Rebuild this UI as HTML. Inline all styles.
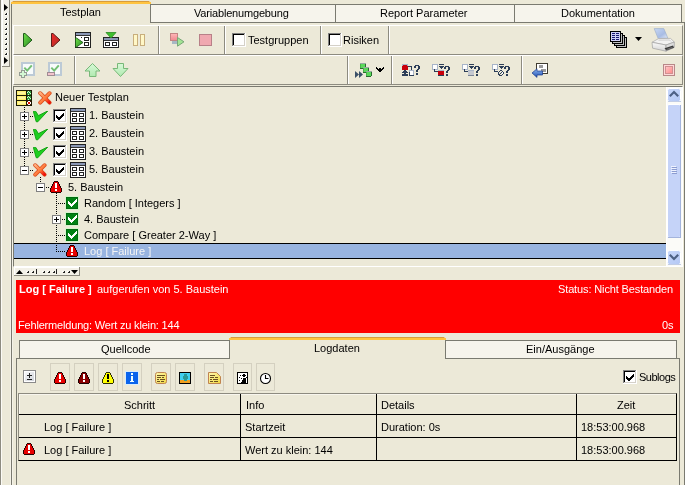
<!DOCTYPE html>
<html><head><meta charset="utf-8">
<style>
*{margin:0;padding:0;box-sizing:border-box}
html,body{width:685px;height:485px;overflow:hidden;background:#ece9d8;font-family:"Liberation Sans",sans-serif;font-size:11px;color:#000}
.a{position:absolute}
.t{position:absolute;white-space:pre;line-height:13px;filter:grayscale(1)}
.tab{position:absolute;background:#f6f4ec;border:1px solid #7a7a70;border-bottom:none}
.hl{position:absolute;height:1px}
.vl{position:absolute;width:1px}
.cb{position:absolute;width:13px;height:13px;background:#fff;border:1px solid #1c5180}
svg{position:absolute;overflow:visible}
</style></head><body>

<!-- left strip -->
<svg style="left:0;top:0" width="14" height="485" shape-rendering="crispEdges">
<rect x="0" y="0" width="1" height="485" fill="#8d8b80"/>
<rect x="1" y="0" width="1" height="485" fill="#fbfaf5"/>
<rect x="2" y="0" width="7" height="66" fill="#f1efe6"/>
<rect x="2" y="0" width="1" height="66" fill="#fff"/>
<rect x="9" y="0" width="1" height="67" fill="#8d8b80"/>
<rect x="2" y="66" width="8" height="1" fill="#8d8b80"/>
<g fill="#fff"><rect x="7" y="13" width="1" height="2"/><rect x="5" y="15" width="2" height="1"/><rect x="7" y="18" width="1" height="2"/><rect x="5" y="20" width="2" height="1"/><rect x="7" y="23" width="1" height="2"/><rect x="5" y="25" width="2" height="1"/><rect x="7" y="28" width="1" height="2"/><rect x="5" y="30" width="2" height="1"/><rect x="7" y="33" width="1" height="2"/><rect x="5" y="35" width="2" height="1"/><rect x="7" y="38" width="1" height="2"/><rect x="5" y="40" width="2" height="1"/><rect x="7" y="43" width="1" height="2"/><rect x="5" y="45" width="2" height="1"/><rect x="7" y="48" width="1" height="2"/><rect x="5" y="50" width="2" height="1"/><rect x="7" y="53" width="1" height="2"/><rect x="5" y="55" width="2" height="1"/></g>
<g fill="#222"><rect x="6" y="13" width="1" height="1"/><rect x="5" y="14" width="2" height="1"/><rect x="6" y="18" width="1" height="1"/><rect x="5" y="19" width="2" height="1"/><rect x="6" y="23" width="1" height="1"/><rect x="5" y="24" width="2" height="1"/><rect x="6" y="28" width="1" height="1"/><rect x="5" y="29" width="2" height="1"/><rect x="6" y="33" width="1" height="1"/><rect x="5" y="34" width="2" height="1"/><rect x="6" y="38" width="1" height="1"/><rect x="5" y="39" width="2" height="1"/><rect x="6" y="43" width="1" height="1"/><rect x="5" y="44" width="2" height="1"/><rect x="6" y="48" width="1" height="1"/><rect x="5" y="49" width="2" height="1"/><rect x="6" y="53" width="1" height="1"/><rect x="5" y="54" width="2" height="1"/></g>
<path d="M4 4 L8 7.5 L4 11 Z" fill="#000" shape-rendering="auto"/>
<path d="M4 57 L8 60.5 L4 64 Z" fill="#000" shape-rendering="auto"/>
<rect x="12" y="23" width="1" height="462" fill="#f4f2e8"/><rect x="10" y="67" width="1" height="418" fill="#f4f2e8"/>
</svg>
<!-- top tabs -->
<div class="tab" style="left:150px;top:4px;width:186px;height:19px"></div>
<div class="tab" style="left:335px;top:4px;width:180px;height:19px"></div>
<div class="tab" style="left:514px;top:4px;width:168px;height:19px"></div>
<div class="a" style="left:11px;top:1px;width:140px;height:23px;background:#ece9d8"></div>
<div class="a" style="left:13px;top:1px;width:136px;height:1px;background:#d89c3c"></div>
<div class="a" style="left:11px;top:2px;width:140px;height:2px;background:#ffc440"></div>
<div class="a" style="left:12px;top:1px;width:1px;height:1px;background:#f0c890"></div>
<div class="a" style="left:149px;top:1px;width:1px;height:1px;background:#f0c890"></div>
<div class="a" style="left:11px;top:4px;width:1px;height:20px;background:#7a7a70"></div>
<div class="a" style="left:150px;top:4px;width:1px;height:19px;background:#7a7a70"></div>
<div class="t" style="left:60px;top:6px">Testplan</div>
<div class="t" style="left:194px;top:7px;letter-spacing:-0.18px">Variablenumgebung</div>
<div class="t" style="left:380px;top:7px">Report Parameter</div>
<div class="t" style="left:561px;top:7px">Dokumentation</div>

<!-- content border -->
<div class="hl" style="left:150px;top:22px;width:535px;background:#7a7a70"></div>
<div class="vl" style="left:11px;top:22px;height:463px;background:#7a7a70"></div>
<div class="vl" style="left:684px;top:22px;height:463px;background:#7a7a70"></div>

<!-- toolbar 1 -->
<div class="a" style="left:13px;top:25px;width:670px;height:30px;border-top:1px solid #fff;border-left:1px solid #fff;border-bottom:1px solid #8d8b80;border-right:1px solid #8d8b80"></div>

<!-- TOOLBAR1 ICONS -->
<svg style="left:0;top:0" width="685" height="90">
<defs>
<linearGradient id="gp" x1="0" y1="0" x2="1" y2="1"><stop offset="0" stop-color="#6fe04a"/><stop offset="1" stop-color="#2a8a22"/></linearGradient>
<linearGradient id="rp" x1="0" y1="0" x2="1" y2="1"><stop offset="0" stop-color="#f02828"/><stop offset="1" stop-color="#b03028"/></linearGradient>
<linearGradient id="pk" x1="0" y1="0" x2="0" y2="1"><stop offset="0" stop-color="#ffb8b8"/><stop offset="1" stop-color="#f08890"/></linearGradient>
</defs>
<!-- green play -->
<path d="M23.5 33.5 L25 33.5 L32 40 L25 46.5 L23.5 46.5 Z" fill="url(#gp)" stroke="#1f5a1a" stroke-linejoin="round"/>
<!-- red play -->
<path d="M51.5 33.5 L53 33.5 L60 40 L53 46.5 L51.5 46.5 Z" fill="url(#rp)" stroke="#5a1e1a" stroke-linejoin="round"/>
<!-- icon3 window w/ play -->
<g shape-rendering="crispEdges">
<rect x="75.5" y="32.5" width="15" height="15" fill="#fff" stroke="#222"/>
<rect x="76" y="33" width="14" height="2" fill="#8a97b5"/>
<rect x="76" y="35" width="14" height="1" fill="#333"/>
<rect x="84.5" y="37.5" width="4" height="3" fill="#fff" stroke="#222"/>
<rect x="84.5" y="42.5" width="4" height="3" fill="#fff" stroke="#222"/>
<rect x="81" y="37" width="1" height="1" fill="#222"/>
</g>
<path d="M75.5 38 L76.5 38 L83 42.5 L76.5 47 L75.5 47 Z" fill="url(#gp)" stroke="#1f5a1a" stroke-width="0.9" stroke-linejoin="round"/>
<!-- icon4 window w/ down arrow -->
<g shape-rendering="crispEdges">
<rect x="103.5" y="37.5" width="15" height="10" fill="#fff" stroke="#222"/>
<rect x="104" y="38" width="14" height="2" fill="#8a97b5"/>
<rect x="104" y="40" width="14" height="1" fill="#333"/>
<rect x="105.5" y="42.5" width="4" height="3" fill="#fff" stroke="#222"/>
<rect x="112.5" y="42.5" width="4" height="3" fill="#fff" stroke="#222"/>
</g>
<path d="M106 32.5 L116 32.5 L111 38 Z" fill="#3fbf2f" stroke="#2a8a22" stroke-width="0.8" stroke-linejoin="round"/>
<!-- pause -->
<rect x="133.5" y="34.5" width="4" height="11" fill="#fff7c6" stroke="#c8ae7c"/>
<rect x="140.5" y="34.5" width="4" height="11" fill="#fff7c6" stroke="#c8ae7c"/>
<!-- sep -->
<rect x="158" y="26" width="1" height="28" fill="#8d8b80"/><rect x="159" y="26" width="1" height="28" fill="#fff"/>
<!-- pink squares + green arrow -->
<rect x="172" y="41" width="6" height="3" fill="#a8b8c4" shape-rendering="crispEdges"/>
<rect x="170.5" y="33.5" width="7" height="7" fill="url(#pk)" stroke="#c48484"/>
<path d="M177.5 37.5 L184 41.8 L177.5 46.2 Z" fill="#a4e494" stroke="#78a878" stroke-linejoin="round"/>
<!-- stop -->
<rect x="199.5" y="34.5" width="12" height="11" fill="#f0a8b0" stroke="#b88088"/>
<rect x="224" y="26" width="1" height="28" fill="#8d8b80"/><rect x="225" y="26" width="1" height="28" fill="#fff"/>
<rect x="320" y="26" width="1" height="28" fill="#8d8b80"/><rect x="321" y="26" width="1" height="28" fill="#fff"/>
<rect x="388" y="26" width="1" height="28" fill="#8d8b80"/><rect x="389" y="26" width="1" height="28" fill="#fff"/>
<!-- doc stack -->
<g shape-rendering="crispEdges">
<rect x="616.5" y="37.5" width="10" height="10" fill="#fff" stroke="#000"/><rect x="617" y="46" width="9" height="1" fill="#c0c0c0"/><rect x="625" y="38" width="1" height="8" fill="#c0c0c0"/>
<rect x="614.5" y="35.5" width="10" height="10" fill="#fff" stroke="#000"/><rect x="615" y="44" width="9" height="1" fill="#c0c0c0"/><rect x="623" y="36" width="1" height="8" fill="#c0c0c0"/>
<rect x="612.5" y="33.5" width="10" height="10" fill="#fff" stroke="#000"/><rect x="613" y="42" width="9" height="1" fill="#c0c0c0"/><rect x="621" y="34" width="1" height="8" fill="#c0c0c0"/>
<rect x="610.5" y="31.5" width="10" height="10" fill="#cfd0f6" stroke="#000"/>
<g fill="#1a1a70"><rect x="612" y="33" width="3" height="1"/><rect x="616" y="33" width="3" height="1"/>
<rect x="612" y="35" width="3" height="1"/><rect x="616" y="35" width="3" height="1"/>
<rect x="612" y="37" width="3" height="1"/><rect x="616" y="37" width="3" height="1"/>
<rect x="612" y="39" width="3" height="1"/><rect x="616" y="39" width="3" height="1"/></g>
</g>
<path d="M635 37 H642 L638.5 41 Z" fill="#000"/>
<!-- printer -->
<defs><linearGradient id="ppr" x1="0" y1="0" x2="1" y2="1"><stop offset="0" stop-color="#c8d8f4"/><stop offset="0.6" stop-color="#a8bce4"/><stop offset="1" stop-color="#e8eef8"/></linearGradient>
<linearGradient id="pbd" x1="0" y1="0" x2="0" y2="1"><stop offset="0" stop-color="#fafafa"/><stop offset="1" stop-color="#d4d4d4"/></linearGradient></defs>
<path d="M654.2 28.6 L663.8 28.6 L667.8 38 L658.2 38.6 Z" fill="url(#ppr)" stroke="#9fb0cc" stroke-width="0.7"/>
<path d="M652 42.3 L658.5 38.6 L670.5 38.4 L674.3 42 L666 45 Z" fill="#f2f2f2" stroke="#a8a8a8" stroke-width="0.7"/>
<path d="M658.5 40.2 L669.5 40 L671 41.5" fill="none" stroke="#c0c0c0" stroke-width="0.7"/>
<path d="M652 42.3 L666 45 L666 51.2 L652.6 48.2 Z" fill="url(#pbd)" stroke="#a0a0a0" stroke-width="0.7"/>
<path d="M666 45 L674.3 42 L674.3 47.4 L666 51.2 Z" fill="#dcdcdc" stroke="#a0a0a0" stroke-width="0.7"/>
<path d="M664.5 48.2 L673 45.6 L674 47.8 L666.5 50.6 Z" fill="#3a3a3a"/>
<path d="M666.6 49.5 L672.5 47.4" stroke="#9a9a9a" stroke-width="0.6"/>
</g>
</svg>
<svg style="left:232px;top:33px" width="14" height="14"><use href="#chk0"/></svg>
<svg style="left:328px;top:33px" width="14" height="14"><use href="#chk0"/></svg>
<div class="t" style="left:248px;top:34px">Testgruppen</div>
<div class="t" style="left:343px;top:34px">Risiken</div>
<!-- toolbar 2 -->
<div class="a" style="left:13px;top:55px;width:670px;height:30px;border-top:1px solid #fff;border-left:1px solid #fff;border-bottom:1px solid #8d8b80;border-right:1px solid #8d8b80"></div>


<!-- TOOLBAR2 ICONS -->
<svg style="left:0;top:0" width="685" height="90">
<defs>
<linearGradient id="ar" x1="0" y1="0" x2="0" y2="1"><stop offset="0" stop-color="#d8f8d8"/><stop offset="1" stop-color="#b0eab0"/></linearGradient>
<linearGradient id="bl" x1="0" y1="0" x2="0" y2="1"><stop offset="0" stop-color="#8ab4f0"/><stop offset="1" stop-color="#2050b0"/></linearGradient>
<linearGradient id="rq" x1="0" y1="0" x2="1" y2="1"><stop offset="0" stop-color="#ffc8c8"/><stop offset="1" stop-color="#ff8888"/></linearGradient>
</defs>
<!-- add check -->
<g shape-rendering="crispEdges">
<rect x="21" y="62" width="14" height="14" fill="#bccad6"/><rect x="23" y="64" width="10" height="10" fill="#f8fbfb"/>
<rect x="48" y="62" width="14" height="14" fill="#bccad6"/><rect x="50" y="64" width="10" height="10" fill="#f8fbfb"/>
</g>
<path d="M24.3 67.6 L27.2 70.6 L31.8 65.4" fill="none" stroke="#74c074" stroke-width="2"/>
<path d="M51.3 67.6 L54.2 70.6 L58.8 65.4" fill="none" stroke="#74c074" stroke-width="2"/>
<g shape-rendering="crispEdges">
<rect x="21" y="70" width="4" height="8" fill="#949c94"/><rect x="19" y="72" width="8" height="4" fill="#949c94"/>
<rect x="22" y="71" width="2" height="6" fill="#d4f8d4"/><rect x="20" y="73" width="6" height="2" fill="#d4f8d4"/>
<rect x="47" y="72" width="8" height="4" fill="#a08c94"/><rect x="48" y="73" width="6" height="2" fill="#f2c4cc"/>
</g>
<!-- sep -->
<rect x="74" y="56" width="1" height="28" fill="#8d8b80"/><rect x="75" y="56" width="1" height="28" fill="#fff"/>
<!-- up arrow -->
<path d="M92.5 63.5 L100 71 L96 71 L96 76.5 L89.5 76.5 L89.5 71 L85 71 Z" fill="url(#ar)" stroke="#78b878" stroke-linejoin="round"/>
<!-- down arrow -->
<path d="M117.5 63.5 L123.5 63.5 L123.5 68.5 L128 68.5 L120.5 76.5 L113 68.5 L117.5 68.5 Z" fill="url(#ar)" stroke="#78b878" stroke-linejoin="round"/>
<!-- seps -->
<rect x="347" y="56" width="1" height="28" fill="#8d8b80"/><rect x="348" y="56" width="1" height="28" fill="#fff"/>
<rect x="391" y="56" width="1" height="28" fill="#8d8b80"/><rect x="392" y="56" width="1" height="28" fill="#fff"/>
<rect x="521" y="56" width="1" height="28" fill="#8d8b80"/><rect x="522" y="56" width="1" height="28" fill="#fff"/>
<!-- green squares -->
<g shape-rendering="crispEdges"><rect x="360" y="63" width="1" height="1" fill="#98a8a0"/><rect x="361" y="63" width="1" height="1" fill="#98a8a0"/><rect x="362" y="63" width="1" height="1" fill="#98a8a0"/><rect x="363" y="63" width="1" height="1" fill="#98a8a0"/><rect x="364" y="63" width="1" height="1" fill="#98a8a0"/><rect x="365" y="63" width="1" height="1" fill="#98a8a0"/><rect x="360" y="64" width="1" height="1" fill="#48b048"/><rect x="361" y="64" width="1" height="1" fill="#5ad85a"/><rect x="362" y="64" width="1" height="1" fill="#5ad85a"/><rect x="363" y="64" width="1" height="1" fill="#5ad85a"/><rect x="364" y="64" width="1" height="1" fill="#5ad85a"/><rect x="365" y="64" width="1" height="1" fill="#2a6a30"/><rect x="360" y="65" width="1" height="1" fill="#48b048"/><rect x="361" y="65" width="1" height="1" fill="#5ad85a"/><rect x="362" y="65" width="1" height="1" fill="#5ad85a"/><rect x="363" y="65" width="1" height="1" fill="#5ad85a"/><rect x="364" y="65" width="1" height="1" fill="#5ad85a"/><rect x="365" y="65" width="1" height="1" fill="#2a6a30"/><rect x="360" y="66" width="1" height="1" fill="#48b048"/><rect x="361" y="66" width="1" height="1" fill="#5ad85a"/><rect x="362" y="66" width="1" height="1" fill="#5ad85a"/><rect x="363" y="66" width="1" height="1" fill="#5ad85a"/><rect x="364" y="66" width="1" height="1" fill="#5ad85a"/><rect x="365" y="66" width="1" height="1" fill="#2a6a30"/><rect x="360" y="67" width="1" height="1" fill="#48b048"/><rect x="361" y="67" width="1" height="1" fill="#5ad85a"/><rect x="362" y="67" width="1" height="1" fill="#5ad85a"/><rect x="363" y="67" width="1" height="1" fill="#5ad85a"/><rect x="364" y="67" width="1" height="1" fill="#5ad85a"/><rect x="365" y="67" width="1" height="1" fill="#2a6a30"/><rect x="360" y="68" width="1" height="1" fill="#2a6a30"/><rect x="361" y="68" width="1" height="1" fill="#2a6a30"/><rect x="362" y="68" width="1" height="1" fill="#2a6a30"/><rect x="363" y="68" width="1" height="1" fill="#2a6a30"/><rect x="364" y="68" width="1" height="1" fill="#2a6a30"/><rect x="363" y="67" width="1" height="1" fill="#98a8a0"/><rect x="364" y="67" width="1" height="1" fill="#98a8a0"/><rect x="365" y="67" width="1" height="1" fill="#98a8a0"/><rect x="366" y="67" width="1" height="1" fill="#98a8a0"/><rect x="367" y="67" width="1" height="1" fill="#98a8a0"/><rect x="368" y="67" width="1" height="1" fill="#98a8a0"/><rect x="363" y="68" width="1" height="1" fill="#48b048"/><rect x="364" y="68" width="1" height="1" fill="#5ad85a"/><rect x="365" y="68" width="1" height="1" fill="#5ad85a"/><rect x="366" y="68" width="1" height="1" fill="#5ad85a"/><rect x="367" y="68" width="1" height="1" fill="#5ad85a"/><rect x="368" y="68" width="1" height="1" fill="#2a6a30"/><rect x="363" y="69" width="1" height="1" fill="#48b048"/><rect x="364" y="69" width="1" height="1" fill="#5ad85a"/><rect x="365" y="69" width="1" height="1" fill="#5ad85a"/><rect x="366" y="69" width="1" height="1" fill="#5ad85a"/><rect x="367" y="69" width="1" height="1" fill="#5ad85a"/><rect x="368" y="69" width="1" height="1" fill="#2a6a30"/><rect x="363" y="70" width="1" height="1" fill="#48b048"/><rect x="364" y="70" width="1" height="1" fill="#5ad85a"/><rect x="365" y="70" width="1" height="1" fill="#5ad85a"/><rect x="366" y="70" width="1" height="1" fill="#5ad85a"/><rect x="367" y="70" width="1" height="1" fill="#5ad85a"/><rect x="368" y="70" width="1" height="1" fill="#2a6a30"/><rect x="363" y="71" width="1" height="1" fill="#48b048"/><rect x="364" y="71" width="1" height="1" fill="#5ad85a"/><rect x="365" y="71" width="1" height="1" fill="#5ad85a"/><rect x="366" y="71" width="1" height="1" fill="#5ad85a"/><rect x="367" y="71" width="1" height="1" fill="#5ad85a"/><rect x="368" y="71" width="1" height="1" fill="#2a6a30"/><rect x="363" y="72" width="1" height="1" fill="#2a6a30"/><rect x="364" y="72" width="1" height="1" fill="#2a6a30"/><rect x="365" y="72" width="1" height="1" fill="#2a6a30"/><rect x="366" y="72" width="1" height="1" fill="#2a6a30"/><rect x="367" y="72" width="1" height="1" fill="#2a6a30"/><rect x="366" y="71" width="1" height="1" fill="#98a8a0"/><rect x="367" y="71" width="1" height="1" fill="#98a8a0"/><rect x="368" y="71" width="1" height="1" fill="#98a8a0"/><rect x="369" y="71" width="1" height="1" fill="#98a8a0"/><rect x="370" y="71" width="1" height="1" fill="#98a8a0"/><rect x="371" y="71" width="1" height="1" fill="#98a8a0"/><rect x="366" y="72" width="1" height="1" fill="#48b048"/><rect x="367" y="72" width="1" height="1" fill="#5ad85a"/><rect x="368" y="72" width="1" height="1" fill="#5ad85a"/><rect x="369" y="72" width="1" height="1" fill="#5ad85a"/><rect x="370" y="72" width="1" height="1" fill="#5ad85a"/><rect x="371" y="72" width="1" height="1" fill="#2a6a30"/><rect x="366" y="73" width="1" height="1" fill="#48b048"/><rect x="367" y="73" width="1" height="1" fill="#5ad85a"/><rect x="368" y="73" width="1" height="1" fill="#5ad85a"/><rect x="369" y="73" width="1" height="1" fill="#5ad85a"/><rect x="370" y="73" width="1" height="1" fill="#5ad85a"/><rect x="371" y="73" width="1" height="1" fill="#2a6a30"/><rect x="366" y="74" width="1" height="1" fill="#48b048"/><rect x="367" y="74" width="1" height="1" fill="#5ad85a"/><rect x="368" y="74" width="1" height="1" fill="#5ad85a"/><rect x="369" y="74" width="1" height="1" fill="#5ad85a"/><rect x="370" y="74" width="1" height="1" fill="#5ad85a"/><rect x="371" y="74" width="1" height="1" fill="#2a6a30"/><rect x="366" y="75" width="1" height="1" fill="#48b048"/><rect x="367" y="75" width="1" height="1" fill="#5ad85a"/><rect x="368" y="75" width="1" height="1" fill="#5ad85a"/><rect x="369" y="75" width="1" height="1" fill="#5ad85a"/><rect x="370" y="75" width="1" height="1" fill="#5ad85a"/><rect x="371" y="75" width="1" height="1" fill="#2a6a30"/><rect x="366" y="76" width="1" height="1" fill="#2a6a30"/><rect x="367" y="76" width="1" height="1" fill="#2a6a30"/><rect x="368" y="76" width="1" height="1" fill="#2a6a30"/><rect x="369" y="76" width="1" height="1" fill="#2a6a30"/><rect x="370" y="76" width="1" height="1" fill="#2a6a30"/><rect x="376" y="67" width="1" height="1" fill="#000"/><rect x="383" y="67" width="1" height="1" fill="#000"/><rect x="376" y="68" width="1" height="1" fill="#000"/><rect x="377" y="68" width="1" height="1" fill="#000"/><rect x="379" y="68" width="1" height="1" fill="#000"/><rect x="380" y="68" width="1" height="1" fill="#000"/><rect x="382" y="68" width="1" height="1" fill="#000"/><rect x="383" y="68" width="1" height="1" fill="#000"/><rect x="377" y="69" width="1" height="1" fill="#000"/><rect x="378" y="69" width="1" height="1" fill="#000"/><rect x="379" y="69" width="1" height="1" fill="#000"/><rect x="380" y="69" width="1" height="1" fill="#000"/><rect x="381" y="69" width="1" height="1" fill="#000"/><rect x="382" y="69" width="1" height="1" fill="#000"/><rect x="378" y="70" width="1" height="1" fill="#000"/><rect x="379" y="70" width="1" height="1" fill="#000"/><rect x="380" y="70" width="1" height="1" fill="#000"/><rect x="381" y="70" width="1" height="1" fill="#000"/><rect x="379" y="71" width="1" height="1" fill="#000"/><rect x="380" y="71" width="1" height="1" fill="#000"/></g>
<path d="M355 71 L359 74.5 L355 78 Z M359 71 L363 74.5 L359 78 Z" fill="#3a5068"/>
<!-- icon a -->
<g shape-rendering="crispEdges"><rect x="402" y="64" width="6" height="1" fill="#a8b4c8"/><rect x="402" y="65" width="1" height="1" fill="#a8b4c8"/><rect x="403" y="65" width="4" height="1" fill="#c8000c"/><rect x="407" y="65" width="1" height="1" fill="#a8b4c8"/><rect x="402" y="66" width="6" height="1" fill="#c8000c"/><rect x="408" y="66" width="4" height="1" fill="#2c3e58"/><rect x="402" y="67" width="6" height="1" fill="#c8000c"/><rect x="411" y="67" width="1" height="1" fill="#2c3e58"/><rect x="402" y="68" width="6" height="1" fill="#c8000c"/><rect x="411" y="68" width="1" height="1" fill="#2c3e58"/><rect x="402" y="69" width="6" height="1" fill="#c8000c"/><rect x="411" y="69" width="1" height="1" fill="#2c3e58"/><rect x="404" y="70" width="2" height="1" fill="#2c3e58"/><rect x="409" y="70" width="5" height="1" fill="#a8b4c8"/><rect x="403" y="71" width="4" height="1" fill="#2c3e58"/><rect x="409" y="71" width="1" height="1" fill="#a8b4c8"/><rect x="410" y="71" width="3" height="1" fill="#ffffff"/><rect x="413" y="71" width="1" height="1" fill="#a8b4c8"/><rect x="402" y="72" width="6" height="1" fill="#2c3e58"/><rect x="409" y="72" width="1" height="1" fill="#2c3e58"/><rect x="410" y="72" width="3" height="1" fill="#ffffff"/><rect x="413" y="72" width="1" height="1" fill="#a8b4c8"/><rect x="404" y="73" width="2" height="1" fill="#2c3e58"/><rect x="409" y="73" width="1" height="1" fill="#2c3e58"/><rect x="410" y="73" width="3" height="1" fill="#ffffff"/><rect x="413" y="73" width="1" height="1" fill="#a8b4c8"/><rect x="402" y="74" width="6" height="1" fill="#2c3e58"/><rect x="409" y="74" width="1" height="1" fill="#2c3e58"/><rect x="410" y="74" width="3" height="1" fill="#ffffff"/><rect x="413" y="74" width="1" height="1" fill="#a8b4c8"/><rect x="402" y="75" width="6" height="1" fill="#2c3e58"/><rect x="409" y="75" width="5" height="1" fill="#2c3e58"/><rect x="415" y="65" width="4" height="1" fill="#2c3e58"/><rect x="414" y="66" width="2" height="1" fill="#2c3e58"/><rect x="418" y="66" width="2" height="1" fill="#2c3e58"/><rect x="414" y="67" width="2" height="1" fill="#2c3e58"/><rect x="418" y="67" width="2" height="1" fill="#2c3e58"/><rect x="418" y="68" width="2" height="1" fill="#2c3e58"/><rect x="417" y="69" width="2" height="1" fill="#2c3e58"/><rect x="416" y="70" width="2" height="1" fill="#2c3e58"/><rect x="416" y="71" width="2" height="1" fill="#2c3e58"/><rect x="416" y="73" width="2" height="1" fill="#2c3e58"/><rect x="416" y="74" width="2" height="1" fill="#2c3e58"/><rect x="432" y="64" width="6" height="1" fill="#a8b4c8"/><rect x="439" y="64" width="5" height="1" fill="#2c3e58"/><rect x="432" y="65" width="1" height="1" fill="#a8b4c8"/><rect x="433" y="65" width="4" height="1" fill="#ffffff"/><rect x="437" y="65" width="1" height="1" fill="#a8b4c8"/><rect x="432" y="66" width="1" height="1" fill="#a8b4c8"/><rect x="433" y="66" width="4" height="1" fill="#ffffff"/><rect x="437" y="66" width="1" height="1" fill="#a8b4c8"/><rect x="439" y="66" width="5" height="1" fill="#2c3e58"/><rect x="432" y="67" width="1" height="1" fill="#a8b4c8"/><rect x="433" y="67" width="4" height="1" fill="#ffffff"/><rect x="437" y="67" width="1" height="1" fill="#a8b4c8"/><rect x="440" y="67" width="3" height="1" fill="#2c3e58"/><rect x="432" y="68" width="1" height="1" fill="#a8b4c8"/><rect x="433" y="68" width="4" height="1" fill="#ffffff"/><rect x="437" y="68" width="1" height="1" fill="#a8b4c8"/><rect x="441" y="68" width="1" height="1" fill="#2c3e58"/><rect x="432" y="69" width="2" height="1" fill="#a8b4c8"/><rect x="434" y="69" width="1" height="1" fill="#2c3e58"/><rect x="435" y="69" width="3" height="1" fill="#a8b4c8"/><rect x="434" y="70" width="1" height="1" fill="#2c3e58"/><rect x="438" y="70" width="6" height="1" fill="#a8b4c8"/><rect x="434" y="71" width="4" height="1" fill="#2c3e58"/><rect x="438" y="71" width="6" height="1" fill="#c8000c"/><rect x="438" y="72" width="6" height="1" fill="#c8000c"/><rect x="438" y="73" width="6" height="1" fill="#c8000c"/><rect x="438" y="74" width="6" height="1" fill="#c8000c"/><rect x="438" y="75" width="6" height="1" fill="#2c3e58"/><rect x="445" y="66" width="4" height="1" fill="#2c3e58"/><rect x="444" y="67" width="2" height="1" fill="#2c3e58"/><rect x="448" y="67" width="2" height="1" fill="#2c3e58"/><rect x="444" y="68" width="2" height="1" fill="#2c3e58"/><rect x="448" y="68" width="2" height="1" fill="#2c3e58"/><rect x="448" y="69" width="2" height="1" fill="#2c3e58"/><rect x="447" y="70" width="2" height="1" fill="#2c3e58"/><rect x="446" y="71" width="2" height="1" fill="#2c3e58"/><rect x="446" y="72" width="2" height="1" fill="#2c3e58"/><rect x="446" y="74" width="2" height="1" fill="#2c3e58"/><rect x="446" y="75" width="2" height="1" fill="#2c3e58"/><rect x="462" y="64" width="6" height="1" fill="#a8b4c8"/><rect x="469" y="64" width="5" height="1" fill="#2c3e58"/><rect x="462" y="65" width="1" height="1" fill="#a8b4c8"/><rect x="463" y="65" width="4" height="1" fill="#ffffff"/><rect x="467" y="65" width="1" height="1" fill="#a8b4c8"/><rect x="462" y="66" width="1" height="1" fill="#a8b4c8"/><rect x="463" y="66" width="4" height="1" fill="#ffffff"/><rect x="467" y="66" width="1" height="1" fill="#a8b4c8"/><rect x="469" y="66" width="5" height="1" fill="#2c3e58"/><rect x="462" y="67" width="1" height="1" fill="#a8b4c8"/><rect x="463" y="67" width="4" height="1" fill="#ffffff"/><rect x="467" y="67" width="1" height="1" fill="#a8b4c8"/><rect x="470" y="67" width="3" height="1" fill="#2c3e58"/><rect x="462" y="68" width="1" height="1" fill="#a8b4c8"/><rect x="463" y="68" width="4" height="1" fill="#ffffff"/><rect x="467" y="68" width="1" height="1" fill="#a8b4c8"/><rect x="471" y="68" width="1" height="1" fill="#2c3e58"/><rect x="462" y="69" width="2" height="1" fill="#a8b4c8"/><rect x="464" y="69" width="1" height="1" fill="#2c3e58"/><rect x="465" y="69" width="3" height="1" fill="#a8b4c8"/><rect x="464" y="70" width="1" height="1" fill="#2c3e58"/><rect x="468" y="70" width="6" height="1" fill="#a8b4c8"/><rect x="464" y="71" width="4" height="1" fill="#2c3e58"/><rect x="468" y="71" width="6" height="1" fill="#c4c8d0"/><rect x="468" y="72" width="6" height="1" fill="#c4c8d0"/><rect x="468" y="73" width="6" height="1" fill="#c4c8d0"/><rect x="468" y="74" width="6" height="1" fill="#c4c8d0"/><rect x="468" y="75" width="6" height="1" fill="#7a8496"/><rect x="475" y="66" width="4" height="1" fill="#2c3e58"/><rect x="474" y="67" width="2" height="1" fill="#2c3e58"/><rect x="478" y="67" width="2" height="1" fill="#2c3e58"/><rect x="474" y="68" width="2" height="1" fill="#2c3e58"/><rect x="478" y="68" width="2" height="1" fill="#2c3e58"/><rect x="478" y="69" width="2" height="1" fill="#2c3e58"/><rect x="477" y="70" width="2" height="1" fill="#2c3e58"/><rect x="476" y="71" width="2" height="1" fill="#2c3e58"/><rect x="476" y="72" width="2" height="1" fill="#2c3e58"/><rect x="476" y="74" width="2" height="1" fill="#2c3e58"/><rect x="476" y="75" width="2" height="1" fill="#2c3e58"/><rect x="492" y="64" width="6" height="1" fill="#a8b4c8"/><rect x="499" y="64" width="5" height="1" fill="#2c3e58"/><rect x="492" y="65" width="1" height="1" fill="#a8b4c8"/><rect x="493" y="65" width="4" height="1" fill="#ffffff"/><rect x="497" y="65" width="1" height="1" fill="#a8b4c8"/><rect x="492" y="66" width="1" height="1" fill="#a8b4c8"/><rect x="493" y="66" width="4" height="1" fill="#ffffff"/><rect x="497" y="66" width="1" height="1" fill="#a8b4c8"/><rect x="499" y="66" width="5" height="1" fill="#2c3e58"/><rect x="492" y="67" width="1" height="1" fill="#a8b4c8"/><rect x="493" y="67" width="4" height="1" fill="#ffffff"/><rect x="497" y="67" width="1" height="1" fill="#a8b4c8"/><rect x="500" y="67" width="3" height="1" fill="#2c3e58"/><rect x="492" y="68" width="1" height="1" fill="#a8b4c8"/><rect x="493" y="68" width="4" height="1" fill="#ffffff"/><rect x="497" y="68" width="1" height="1" fill="#a8b4c8"/><rect x="501" y="68" width="1" height="1" fill="#2c3e58"/><rect x="492" y="69" width="2" height="1" fill="#a8b4c8"/><rect x="494" y="69" width="1" height="1" fill="#2c3e58"/><rect x="495" y="69" width="3" height="1" fill="#a8b4c8"/><rect x="494" y="70" width="1" height="1" fill="#2c3e58"/><rect x="500" y="70" width="2" height="1" fill="#2c3e58"/><rect x="494" y="71" width="4" height="1" fill="#2c3e58"/><rect x="499" y="71" width="1" height="1" fill="#2c3e58"/><rect x="502" y="71" width="1" height="1" fill="#2c3e58"/><rect x="498" y="72" width="1" height="1" fill="#2c3e58"/><rect x="501" y="72" width="1" height="1" fill="#2c3e58"/><rect x="502" y="72" width="1" height="1" fill="#ffffff"/><rect x="503" y="72" width="1" height="1" fill="#2c3e58"/><rect x="498" y="73" width="1" height="1" fill="#2c3e58"/><rect x="500" y="73" width="1" height="1" fill="#2c3e58"/><rect x="502" y="73" width="1" height="1" fill="#ffffff"/><rect x="503" y="73" width="1" height="1" fill="#2c3e58"/><rect x="498" y="74" width="2" height="1" fill="#2c3e58"/><rect x="502" y="74" width="1" height="1" fill="#2c3e58"/><rect x="499" y="75" width="3" height="1" fill="#2c3e58"/><rect x="505" y="66" width="4" height="1" fill="#2c3e58"/><rect x="504" y="67" width="2" height="1" fill="#2c3e58"/><rect x="508" y="67" width="2" height="1" fill="#2c3e58"/><rect x="504" y="68" width="2" height="1" fill="#2c3e58"/><rect x="508" y="68" width="2" height="1" fill="#2c3e58"/><rect x="508" y="69" width="2" height="1" fill="#2c3e58"/><rect x="507" y="70" width="2" height="1" fill="#2c3e58"/><rect x="506" y="71" width="2" height="1" fill="#2c3e58"/><rect x="506" y="72" width="2" height="1" fill="#2c3e58"/><rect x="506" y="74" width="2" height="1" fill="#2c3e58"/><rect x="506" y="75" width="2" height="1" fill="#2c3e58"/></g>
<!-- blue arrow window -->
<g shape-rendering="crispEdges">
<rect x="536.5" y="63.5" width="11" height="10" fill="#fff" stroke="#403c30"/>
<rect x="539" y="65" width="4" height="3" fill="#9a9a9a"/>
<rect x="541" y="69" width="5" height="3" fill="#9a9a9a"/>
</g>
<path d="M532 73 L537 68.8 L537 71 L542.5 71 L542.5 75 L537 75 L537 77.4 Z" fill="url(#bl)" stroke="#1a3a8a" stroke-width="0.7" stroke-linejoin="round"/>
<!-- red square -->
<rect x="663.5" y="64.5" width="11" height="11" fill="#ffd8d8" stroke="#b88888"/>
<rect x="665.5" y="66.5" width="7" height="7" fill="url(#rq)" stroke="#d09090"/>
</svg>
<!-- tree panel -->
<div class="a" style="left:13px;top:86px;width:670px;height:181px;border:1px solid #7a7a70;border-right:1px solid #fff;border-bottom:1px solid #fff"></div>



<!-- scrollbar -->
<div class="a" style="left:666px;top:87px;width:16px;height:179px;background:#fbfbf8;border-left:1px solid #fff"></div>
<svg style="left:666px;top:87px" width="16" height="180">
<defs>
<linearGradient id="sbb" x1="0" y1="0" x2="1" y2="1"><stop offset="0" stop-color="#c8d8fc"/><stop offset="1" stop-color="#b4c8f4"/></linearGradient>
</defs>
<rect x="1.5" y="1.5" width="13" height="13" rx="2" fill="url(#sbb)" stroke="#fff"/>
<rect x="2" y="14" width="13" height="1" fill="#a8b8dc" opacity="0.7"/>
<path d="M3.8 9.2 L8 5 L12.2 9.2" fill="none" stroke="#4d6185" stroke-width="2.2"/>
<rect x="1.5" y="17.5" width="13" height="133" rx="1.5" fill="#c5d3f8" stroke="#fff"/>
<rect x="14" y="18" width="1" height="133" fill="#a4b4dc"/>
<rect x="2" y="150" width="13" height="1" fill="#a4b4dc"/>
<g shape-rendering="crispEdges">
<rect x="5" y="79" width="5" height="1" fill="#eef2fe"/><rect x="6" y="80" width="5" height="1" fill="#8c9cd0"/>
<rect x="5" y="81" width="5" height="1" fill="#eef2fe"/><rect x="6" y="82" width="5" height="1" fill="#8c9cd0"/>
<rect x="5" y="83" width="5" height="1" fill="#eef2fe"/><rect x="6" y="84" width="5" height="1" fill="#8c9cd0"/>
<rect x="5" y="85" width="5" height="1" fill="#eef2fe"/><rect x="6" y="86" width="5" height="1" fill="#8c9cd0"/>
</g>
<rect x="1.5" y="163.5" width="13" height="14" rx="2" fill="url(#sbb)" stroke="#fff"/>
<rect x="2" y="177" width="13" height="1" fill="#a8b8dc" opacity="0.7"/>
<path d="M3.8 167.8 L8 172 L12.2 167.8" fill="none" stroke="#4d6185" stroke-width="2.2"/>
</svg>
<!-- selected row -->
<div class="a" style="left:14px;top:243px;width:652px;height:16px;background:#98b4e0;border-top:1px solid #000;border-bottom:1px solid #000"></div>
<!-- TREE -->
<svg width="0" height="0" style="position:absolute">
<defs>
<symbol id="grid" viewBox="0 0 16 16" shape-rendering="crispEdges">
<rect x="0.5" y="0.5" width="15" height="15" fill="#fff" stroke="#222"/>
<rect x="1" y="1" width="14" height="2" fill="#8a97b5"/>
<rect x="1" y="3" width="14" height="1" fill="#333"/>
<rect x="2.5" y="5.5" width="4" height="3" fill="#fff" stroke="#222"/>
<rect x="9.5" y="5.5" width="4" height="3" fill="#fff" stroke="#222"/>
<rect x="2.5" y="10.5" width="4" height="3" fill="#fff" stroke="#222"/>
<rect x="9.5" y="10.5" width="4" height="3" fill="#fff" stroke="#222"/>
</symbol>
<symbol id="chk0" viewBox="0 0 14 14" shape-rendering="crispEdges">
<rect x="0" y="0" width="14" height="14" fill="#fff"/>
<rect x="0" y="0" width="13" height="13" fill="#808080"/>
<rect x="1" y="1" width="12" height="12" fill="#d4d0c8"/>
<rect x="1" y="1" width="11" height="11" fill="#000"/>
<rect x="2" y="2" width="10" height="10" fill="#fff"/>
</symbol>
<symbol id="chk" viewBox="0 0 14 14" shape-rendering="crispEdges">
<rect x="0" y="0" width="14" height="14" fill="#fff"/>
<rect x="0" y="0" width="13" height="13" fill="#808080"/>
<rect x="1" y="1" width="12" height="12" fill="#d4d0c8"/>
<rect x="1" y="1" width="11" height="11" fill="#000"/>
<rect x="2" y="2" width="10" height="10" fill="#fff"/>
<g fill="#000"><rect x="10" y="4" width="1" height="1"/><rect x="9" y="5" width="1" height="1"/><rect x="10" y="5" width="1" height="1"/><rect x="3" y="6" width="1" height="1"/><rect x="8" y="6" width="1" height="1"/><rect x="9" y="6" width="1" height="1"/><rect x="10" y="6" width="1" height="1"/><rect x="3" y="7" width="1" height="1"/><rect x="4" y="7" width="1" height="1"/><rect x="7" y="7" width="1" height="1"/><rect x="8" y="7" width="1" height="1"/><rect x="9" y="7" width="1" height="1"/><rect x="3" y="8" width="1" height="1"/><rect x="4" y="8" width="1" height="1"/><rect x="5" y="8" width="1" height="1"/><rect x="6" y="8" width="1" height="1"/><rect x="7" y="8" width="1" height="1"/><rect x="8" y="8" width="1" height="1"/><rect x="4" y="9" width="1" height="1"/><rect x="5" y="9" width="1" height="1"/><rect x="6" y="9" width="1" height="1"/><rect x="7" y="9" width="1" height="1"/><rect x="5" y="10" width="1" height="1"/><rect x="6" y="10" width="1" height="1"/></g>
</symbol>
<symbol id="gchk" viewBox="0 0 16 12">
<path d="M0.3 0.3 L2.6 0.2 L5.4 4.6 L15 -0.2 L4.6 10.9 L3.2 10.7 Z" fill="#1fcf1f" stroke="#0f9f0f" stroke-width="0.9" stroke-linejoin="round"/>
</symbol>
<symbol id="xic" viewBox="0 0 14 14">
<defs><linearGradient id="xg" x1="0" y1="0" x2="1" y2="1"><stop offset="0" stop-color="#ffb080"/><stop offset="0.55" stop-color="#ff7a3a"/><stop offset="1" stop-color="#f00808"/></linearGradient></defs>
<path d="M2.2 2.2 L11.6 11.6 M11.6 2.2 L2.2 11.6" stroke="#d84818" stroke-width="3.9" stroke-linecap="round"/><path d="M2.2 2.2 L11.6 11.6 M11.6 2.2 L2.2 11.6" stroke="url(#xg)" stroke-width="2.5" stroke-linecap="round"/>
</symbol>
<symbol id="warn" viewBox="0 0 12 12" shape-rendering="crispEdges"><rect x="4" y="0" width="4" height="1" fill="#2a0000"/><rect x="3" y="1" width="1" height="1" fill="#2a0000"/><rect x="4" y="1" width="4" height="1" fill="#e80000"/><rect x="8" y="1" width="1" height="1" fill="#2a0000"/><rect x="3" y="2" width="1" height="1" fill="#2a0000"/><rect x="4" y="2" width="1" height="1" fill="#e80000"/><rect x="5" y="2" width="2" height="1" fill="#fff"/><rect x="7" y="2" width="1" height="1" fill="#e80000"/><rect x="8" y="2" width="1" height="1" fill="#2a0000"/><rect x="2" y="3" width="1" height="1" fill="#2a0000"/><rect x="3" y="3" width="2" height="1" fill="#e80000"/><rect x="5" y="3" width="2" height="1" fill="#fff"/><rect x="7" y="3" width="2" height="1" fill="#e80000"/><rect x="9" y="3" width="1" height="1" fill="#2a0000"/><rect x="2" y="4" width="1" height="1" fill="#2a0000"/><rect x="3" y="4" width="2" height="1" fill="#e80000"/><rect x="5" y="4" width="2" height="1" fill="#fff"/><rect x="7" y="4" width="2" height="1" fill="#e80000"/><rect x="9" y="4" width="1" height="1" fill="#2a0000"/><rect x="1" y="5" width="1" height="1" fill="#2a0000"/><rect x="2" y="5" width="3" height="1" fill="#e80000"/><rect x="5" y="5" width="2" height="1" fill="#fff"/><rect x="7" y="5" width="3" height="1" fill="#e80000"/><rect x="10" y="5" width="1" height="1" fill="#2a0000"/><rect x="1" y="6" width="1" height="1" fill="#2a0000"/><rect x="2" y="6" width="3" height="1" fill="#e80000"/><rect x="5" y="6" width="2" height="1" fill="#fff"/><rect x="7" y="6" width="3" height="1" fill="#e80000"/><rect x="10" y="6" width="1" height="1" fill="#2a0000"/><rect x="0" y="7" width="1" height="1" fill="#2a0000"/><rect x="1" y="7" width="10" height="1" fill="#e80000"/><rect x="11" y="7" width="1" height="1" fill="#2a0000"/><rect x="0" y="8" width="1" height="1" fill="#2a0000"/><rect x="1" y="8" width="4" height="1" fill="#e80000"/><rect x="5" y="8" width="2" height="1" fill="#fff"/><rect x="7" y="8" width="4" height="1" fill="#e80000"/><rect x="11" y="8" width="1" height="1" fill="#2a0000"/><rect x="0" y="9" width="1" height="1" fill="#2a0000"/><rect x="1" y="9" width="4" height="1" fill="#e80000"/><rect x="5" y="9" width="2" height="1" fill="#fff"/><rect x="7" y="9" width="4" height="1" fill="#e80000"/><rect x="11" y="9" width="1" height="1" fill="#2a0000"/><rect x="0" y="10" width="1" height="1" fill="#2a0000"/><rect x="1" y="10" width="10" height="1" fill="#e80000"/><rect x="11" y="10" width="1" height="1" fill="#2a0000"/><rect x="1" y="11" width="10" height="1" fill="#2a0000"/></symbol>
<symbol id="warnd" viewBox="0 0 12 12" shape-rendering="crispEdges"><rect x="4" y="0" width="4" height="1" fill="#200000"/><rect x="3" y="1" width="1" height="1" fill="#200000"/><rect x="4" y="1" width="4" height="1" fill="#8a0000"/><rect x="8" y="1" width="1" height="1" fill="#200000"/><rect x="3" y="2" width="1" height="1" fill="#200000"/><rect x="4" y="2" width="1" height="1" fill="#8a0000"/><rect x="5" y="2" width="2" height="1" fill="#fff"/><rect x="7" y="2" width="1" height="1" fill="#8a0000"/><rect x="8" y="2" width="1" height="1" fill="#200000"/><rect x="2" y="3" width="1" height="1" fill="#200000"/><rect x="3" y="3" width="2" height="1" fill="#8a0000"/><rect x="5" y="3" width="2" height="1" fill="#fff"/><rect x="7" y="3" width="2" height="1" fill="#8a0000"/><rect x="9" y="3" width="1" height="1" fill="#200000"/><rect x="2" y="4" width="1" height="1" fill="#200000"/><rect x="3" y="4" width="2" height="1" fill="#8a0000"/><rect x="5" y="4" width="2" height="1" fill="#fff"/><rect x="7" y="4" width="2" height="1" fill="#8a0000"/><rect x="9" y="4" width="1" height="1" fill="#200000"/><rect x="1" y="5" width="1" height="1" fill="#200000"/><rect x="2" y="5" width="3" height="1" fill="#8a0000"/><rect x="5" y="5" width="2" height="1" fill="#fff"/><rect x="7" y="5" width="3" height="1" fill="#8a0000"/><rect x="10" y="5" width="1" height="1" fill="#200000"/><rect x="1" y="6" width="1" height="1" fill="#200000"/><rect x="2" y="6" width="3" height="1" fill="#8a0000"/><rect x="5" y="6" width="2" height="1" fill="#fff"/><rect x="7" y="6" width="3" height="1" fill="#8a0000"/><rect x="10" y="6" width="1" height="1" fill="#200000"/><rect x="0" y="7" width="1" height="1" fill="#200000"/><rect x="1" y="7" width="10" height="1" fill="#8a0000"/><rect x="11" y="7" width="1" height="1" fill="#200000"/><rect x="0" y="8" width="1" height="1" fill="#200000"/><rect x="1" y="8" width="4" height="1" fill="#8a0000"/><rect x="5" y="8" width="2" height="1" fill="#fff"/><rect x="7" y="8" width="4" height="1" fill="#8a0000"/><rect x="11" y="8" width="1" height="1" fill="#200000"/><rect x="0" y="9" width="1" height="1" fill="#200000"/><rect x="1" y="9" width="4" height="1" fill="#8a0000"/><rect x="5" y="9" width="2" height="1" fill="#fff"/><rect x="7" y="9" width="4" height="1" fill="#8a0000"/><rect x="11" y="9" width="1" height="1" fill="#200000"/><rect x="0" y="10" width="1" height="1" fill="#200000"/><rect x="1" y="10" width="10" height="1" fill="#8a0000"/><rect x="11" y="10" width="1" height="1" fill="#200000"/><rect x="1" y="11" width="10" height="1" fill="#200000"/></symbol>
<symbol id="warny" viewBox="0 0 12 12" shape-rendering="crispEdges"><rect x="4" y="0" width="4" height="1" fill="#303000"/><rect x="3" y="1" width="1" height="1" fill="#303000"/><rect x="4" y="1" width="4" height="1" fill="#ffff00"/><rect x="8" y="1" width="1" height="1" fill="#303000"/><rect x="3" y="2" width="1" height="1" fill="#303000"/><rect x="4" y="2" width="1" height="1" fill="#ffff00"/><rect x="5" y="2" width="2" height="1" fill="#000"/><rect x="7" y="2" width="1" height="1" fill="#ffff00"/><rect x="8" y="2" width="1" height="1" fill="#303000"/><rect x="2" y="3" width="1" height="1" fill="#303000"/><rect x="3" y="3" width="2" height="1" fill="#ffff00"/><rect x="5" y="3" width="2" height="1" fill="#000"/><rect x="7" y="3" width="2" height="1" fill="#ffff00"/><rect x="9" y="3" width="1" height="1" fill="#303000"/><rect x="2" y="4" width="1" height="1" fill="#303000"/><rect x="3" y="4" width="2" height="1" fill="#ffff00"/><rect x="5" y="4" width="2" height="1" fill="#000"/><rect x="7" y="4" width="2" height="1" fill="#ffff00"/><rect x="9" y="4" width="1" height="1" fill="#303000"/><rect x="1" y="5" width="1" height="1" fill="#303000"/><rect x="2" y="5" width="3" height="1" fill="#ffff00"/><rect x="5" y="5" width="2" height="1" fill="#000"/><rect x="7" y="5" width="3" height="1" fill="#ffff00"/><rect x="10" y="5" width="1" height="1" fill="#303000"/><rect x="1" y="6" width="1" height="1" fill="#303000"/><rect x="2" y="6" width="3" height="1" fill="#ffff00"/><rect x="5" y="6" width="2" height="1" fill="#000"/><rect x="7" y="6" width="3" height="1" fill="#ffff00"/><rect x="10" y="6" width="1" height="1" fill="#303000"/><rect x="0" y="7" width="1" height="1" fill="#303000"/><rect x="1" y="7" width="10" height="1" fill="#ffff00"/><rect x="11" y="7" width="1" height="1" fill="#303000"/><rect x="0" y="8" width="1" height="1" fill="#303000"/><rect x="1" y="8" width="4" height="1" fill="#ffff00"/><rect x="5" y="8" width="2" height="1" fill="#000"/><rect x="7" y="8" width="4" height="1" fill="#ffff00"/><rect x="11" y="8" width="1" height="1" fill="#303000"/><rect x="0" y="9" width="1" height="1" fill="#303000"/><rect x="1" y="9" width="4" height="1" fill="#ffff00"/><rect x="5" y="9" width="2" height="1" fill="#000"/><rect x="7" y="9" width="4" height="1" fill="#ffff00"/><rect x="11" y="9" width="1" height="1" fill="#303000"/><rect x="0" y="10" width="1" height="1" fill="#303000"/><rect x="1" y="10" width="10" height="1" fill="#ffff00"/><rect x="11" y="10" width="1" height="1" fill="#303000"/><rect x="1" y="11" width="10" height="1" fill="#303000"/></symbol>
<symbol id="gbox" viewBox="0 0 14 14" shape-rendering="crispEdges">
<rect x="0" y="0" width="14" height="14" fill="#d4f4cc"/>
<rect x="1" y="1" width="12" height="12" fill="#006a10"/>
<rect x="2" y="2" width="10" height="10" fill="#008214"/>
<g fill="#fff"><rect x="11" y="3" width="1" height="1"/><rect x="10" y="4" width="1" height="1"/><rect x="11" y="4" width="1" height="1"/><rect x="3" y="5" width="1" height="1"/><rect x="9" y="5" width="1" height="1"/><rect x="10" y="5" width="1" height="1"/><rect x="11" y="5" width="1" height="1"/><rect x="3" y="6" width="1" height="1"/><rect x="4" y="6" width="1" height="1"/><rect x="8" y="6" width="1" height="1"/><rect x="9" y="6" width="1" height="1"/><rect x="10" y="6" width="1" height="1"/><rect x="3" y="7" width="1" height="1"/><rect x="4" y="7" width="1" height="1"/><rect x="5" y="7" width="1" height="1"/><rect x="7" y="7" width="1" height="1"/><rect x="8" y="7" width="1" height="1"/><rect x="9" y="7" width="1" height="1"/><rect x="4" y="8" width="1" height="1"/><rect x="5" y="8" width="1" height="1"/><rect x="6" y="8" width="1" height="1"/><rect x="7" y="8" width="1" height="1"/><rect x="8" y="8" width="1" height="1"/><rect x="5" y="9" width="1" height="1"/><rect x="6" y="9" width="1" height="1"/><rect x="7" y="9" width="1" height="1"/><rect x="6" y="10" width="1" height="1"/></g>
</symbol>
<symbol id="plus" viewBox="0 0 9 9" shape-rendering="crispEdges">
<rect x="0.5" y="0.5" width="8" height="8" fill="#fff" stroke="#808080"/>
<rect x="2" y="4" width="5" height="1" fill="#000"/>
<rect x="4" y="2" width="1" height="5" fill="#000"/>
</symbol>
<symbol id="minus" viewBox="0 0 9 9" shape-rendering="crispEdges">
<rect x="0.5" y="0.5" width="8" height="8" fill="#fff" stroke="#808080"/>
<rect x="2" y="4" width="5" height="1" fill="#000"/>
</symbol>
<symbol id="root" viewBox="0 0 16 16" shape-rendering="crispEdges">
<rect x="0" y="0" width="16" height="16" fill="#1c1c04"/>
<rect x="1" y="1" width="9" height="4" fill="#fff070"/>
<rect x="1" y="6" width="9" height="4" fill="#fff070"/>
<rect x="1" y="11" width="9" height="4" fill="#fff070"/>
<rect x="2" y="2" width="7" height="2" fill="#fff79c"/>
<rect x="2" y="7" width="7" height="2" fill="#fff79c"/>
<rect x="2" y="12" width="7" height="2" fill="#fff79c"/>
<rect x="11" y="1" width="1" height="1" fill="#2a9a3a"/><rect x="12" y="1" width="1" height="1" fill="#d8f8d0"/><rect x="13" y="1" width="1" height="1" fill="#2a9a3a"/><rect x="14" y="1" width="1" height="1" fill="#2a9a3a"/><rect x="11" y="2" width="1" height="1" fill="#d8f8d0"/><rect x="12" y="2" width="1" height="1" fill="#2a9a3a"/><rect x="13" y="2" width="1" height="1" fill="#d8f8d0"/><rect x="14" y="2" width="1" height="1" fill="#2a9a3a"/><rect x="11" y="3" width="1" height="1" fill="#2a9a3a"/><rect x="12" y="3" width="1" height="1" fill="#2a9a3a"/><rect x="13" y="3" width="1" height="1" fill="#2a9a3a"/><rect x="14" y="3" width="1" height="1" fill="#d8f8d0"/><rect x="11" y="4" width="1" height="1" fill="#2a9a3a"/><rect x="12" y="4" width="1" height="1" fill="#d8f8d0"/><rect x="13" y="4" width="1" height="1" fill="#2a9a3a"/><rect x="14" y="4" width="1" height="1" fill="#2a9a3a"/><rect x="11" y="6" width="1" height="1" fill="#2a9a3a"/><rect x="12" y="6" width="1" height="1" fill="#d8f8d0"/><rect x="13" y="6" width="1" height="1" fill="#2a9a3a"/><rect x="14" y="6" width="1" height="1" fill="#2a9a3a"/><rect x="11" y="7" width="1" height="1" fill="#d8f8d0"/><rect x="12" y="7" width="1" height="1" fill="#2a9a3a"/><rect x="13" y="7" width="1" height="1" fill="#d8f8d0"/><rect x="14" y="7" width="1" height="1" fill="#2a9a3a"/><rect x="11" y="8" width="1" height="1" fill="#2a9a3a"/><rect x="12" y="8" width="1" height="1" fill="#2a9a3a"/><rect x="13" y="8" width="1" height="1" fill="#2a9a3a"/><rect x="14" y="8" width="1" height="1" fill="#d8f8d0"/><rect x="11" y="9" width="1" height="1" fill="#2a9a3a"/><rect x="12" y="9" width="1" height="1" fill="#d8f8d0"/><rect x="13" y="9" width="1" height="1" fill="#2a9a3a"/><rect x="14" y="9" width="1" height="1" fill="#2a9a3a"/><rect x="11" y="11" width="1" height="1" fill="#5a1a10"/><rect x="12" y="11" width="1" height="1" fill="#fff"/><rect x="13" y="11" width="1" height="1" fill="#fff"/><rect x="14" y="11" width="1" height="1" fill="#5a1a10"/><rect x="11" y="12" width="1" height="1" fill="#fff"/><rect x="12" y="12" width="1" height="1" fill="#e01000"/><rect x="13" y="12" width="1" height="1" fill="#e01000"/><rect x="14" y="12" width="1" height="1" fill="#fff"/><rect x="11" y="13" width="1" height="1" fill="#fff"/><rect x="12" y="13" width="1" height="1" fill="#e01000"/><rect x="13" y="13" width="1" height="1" fill="#e01000"/><rect x="14" y="13" width="1" height="1" fill="#fff"/><rect x="11" y="14" width="1" height="1" fill="#5a1a10"/><rect x="12" y="14" width="1" height="1" fill="#fff"/><rect x="13" y="14" width="1" height="1" fill="#fff"/><rect x="14" y="14" width="1" height="1" fill="#5a1a10"/>
</symbol>
</defs>
</svg>
<svg class="dots" style="left:0;top:0" width="685" height="270" shape-rendering="crispEdges">
<g fill="#000">
<rect x="24" y="107" width="1" height="1"/><rect x="24" y="109" width="1" height="1"/><rect x="24" y="111" width="1" height="1"/><rect x="24" y="121" width="1" height="1"/><rect x="24" y="123" width="1" height="1"/><rect x="24" y="125" width="1" height="1"/><rect x="24" y="127" width="1" height="1"/><rect x="24" y="129" width="1" height="1"/><rect x="24" y="139" width="1" height="1"/><rect x="24" y="141" width="1" height="1"/><rect x="24" y="143" width="1" height="1"/><rect x="24" y="145" width="1" height="1"/><rect x="24" y="147" width="1" height="1"/><rect x="24" y="157" width="1" height="1"/><rect x="24" y="159" width="1" height="1"/><rect x="24" y="161" width="1" height="1"/><rect x="24" y="163" width="1" height="1"/><rect x="24" y="165" width="1" height="1"/><rect x="30" y="116" width="1" height="1"/><rect x="32" y="116" width="1" height="1"/><rect x="30" y="134" width="1" height="1"/><rect x="32" y="134" width="1" height="1"/><rect x="30" y="152" width="1" height="1"/><rect x="32" y="152" width="1" height="1"/><rect x="30" y="170" width="1" height="1"/><rect x="32" y="170" width="1" height="1"/><rect x="40" y="177" width="1" height="1"/><rect x="40" y="179" width="1" height="1"/><rect x="40" y="181" width="1" height="1"/><rect x="46" y="187" width="1" height="1"/><rect x="48" y="187" width="1" height="1"/><rect x="56" y="193" width="1" height="1"/><rect x="56" y="195" width="1" height="1"/><rect x="56" y="197" width="1" height="1"/><rect x="56" y="199" width="1" height="1"/><rect x="56" y="201" width="1" height="1"/><rect x="56" y="203" width="1" height="1"/><rect x="56" y="205" width="1" height="1"/><rect x="56" y="207" width="1" height="1"/><rect x="56" y="209" width="1" height="1"/><rect x="56" y="211" width="1" height="1"/><rect x="56" y="213" width="1" height="1"/><rect x="56" y="215" width="1" height="1"/><rect x="56" y="225" width="1" height="1"/><rect x="56" y="227" width="1" height="1"/><rect x="56" y="229" width="1" height="1"/><rect x="56" y="231" width="1" height="1"/><rect x="56" y="233" width="1" height="1"/><rect x="56" y="235" width="1" height="1"/><rect x="56" y="237" width="1" height="1"/><rect x="56" y="239" width="1" height="1"/><rect x="56" y="241" width="1" height="1"/><rect x="56" y="243" width="1" height="1"/><rect x="56" y="245" width="1" height="1"/><rect x="56" y="247" width="1" height="1"/><rect x="56" y="249" width="1" height="1"/><rect x="56" y="251" width="1" height="1"/><rect x="58" y="203" width="1" height="1"/><rect x="60" y="203" width="1" height="1"/><rect x="62" y="203" width="1" height="1"/><rect x="64" y="203" width="1" height="1"/><rect x="58" y="235" width="1" height="1"/><rect x="60" y="235" width="1" height="1"/><rect x="62" y="235" width="1" height="1"/><rect x="64" y="235" width="1" height="1"/><rect x="58" y="251" width="1" height="1"/><rect x="60" y="251" width="1" height="1"/><rect x="62" y="251" width="1" height="1"/><rect x="64" y="251" width="1" height="1"/><rect x="62" y="219" width="1" height="1"/><rect x="64" y="219" width="1" height="1"/></g></svg>
<svg style="left:16px;top:90px" width="16" height="16"><use href="#root"/></svg>
<svg style="left:38px;top:91px" width="14" height="14"><use href="#xic"/></svg>
<div class="t" style="left:55px;top:91px">Neuer Testplan</div>
<svg style="left:20px;top:112px" width="9" height="9"><use href="#plus"/></svg>
<svg style="left:33px;top:111px" width="16" height="12"><use href="#gchk"/></svg>
<svg style="left:53px;top:109px" width="14" height="14"><use href="#chk"/></svg>
<svg style="left:70px;top:108px" width="16" height="16"><use href="#grid"/></svg>
<div class="t" style="left:89px;top:109px">1. Baustein</div>
<svg style="left:20px;top:130px" width="9" height="9"><use href="#plus"/></svg>
<svg style="left:33px;top:129px" width="16" height="12"><use href="#gchk"/></svg>
<svg style="left:53px;top:127px" width="14" height="14"><use href="#chk"/></svg>
<svg style="left:70px;top:126px" width="16" height="16"><use href="#grid"/></svg>
<div class="t" style="left:89px;top:127px">2. Baustein</div>
<svg style="left:20px;top:148px" width="9" height="9"><use href="#plus"/></svg>
<svg style="left:33px;top:147px" width="16" height="12"><use href="#gchk"/></svg>
<svg style="left:53px;top:145px" width="14" height="14"><use href="#chk"/></svg>
<svg style="left:70px;top:144px" width="16" height="16"><use href="#grid"/></svg>
<div class="t" style="left:89px;top:145px">3. Baustein</div>
<svg style="left:20px;top:166px" width="9" height="9"><use href="#minus"/></svg>
<svg style="left:33px;top:163px" width="14" height="14"><use href="#xic"/></svg>
<svg style="left:53px;top:163px" width="14" height="14"><use href="#chk"/></svg>
<svg style="left:70px;top:162px" width="16" height="16"><use href="#grid"/></svg>
<div class="t" style="left:89px;top:163px">5. Baustein</div>
<svg style="left:36px;top:183px" width="9" height="9"><use href="#minus"/></svg>
<svg style="left:50px;top:181px" width="12" height="12"><use href="#warn"/></svg>
<div class="t" style="left:68px;top:181px">5. Baustein</div>
<svg style="left:65px;top:196px" width="14" height="14"><use href="#gbox"/></svg>
<div class="t" style="left:84px;top:197px">Random [ Integers ]</div>
<svg style="left:52px;top:215px" width="9" height="9"><use href="#plus"/></svg>
<svg style="left:65px;top:212px" width="14" height="14"><use href="#gbox"/></svg>
<div class="t" style="left:84px;top:213px">4. Baustein</div>
<svg style="left:65px;top:228px" width="14" height="14"><use href="#gbox"/></svg>
<div class="t" style="left:84px;top:229px">Compare [ Greater 2-Way ]</div>
<svg style="left:66px;top:245px" width="12" height="12"><use href="#warn"/></svg>
<div class="t" style="left:84px;top:245px;color:#f4f4f4">Log [ Failure ]</div>

<!-- splitter -->
<svg style="left:0;top:262px" width="90" height="18" shape-rendering="crispEdges">
<rect x="14" y="5" width="66" height="1" fill="#fff"/>
<rect x="14" y="6" width="65" height="7" fill="#f3f1e8"/>
<rect x="14" y="6" width="1" height="7" fill="#fff"/>
<rect x="14" y="13" width="66" height="1" fill="#8d8b80"/>
<rect x="79" y="5" width="1" height="9" fill="#8d8b80"/>
<g fill="#222" transform="translate(0,-262)"><rect x="26" y="271" width="1" height="1" fill="#fff"/><rect x="27" y="272" width="2" height="1"/><rect x="28" y="271" width="1" height="1"/><rect x="31" y="271" width="1" height="1" fill="#fff"/><rect x="32" y="272" width="2" height="1"/><rect x="33" y="271" width="1" height="1"/><rect x="42" y="271" width="1" height="1" fill="#fff"/><rect x="43" y="272" width="2" height="1"/><rect x="44" y="271" width="1" height="1"/><rect x="47" y="271" width="1" height="1" fill="#fff"/><rect x="48" y="272" width="2" height="1"/><rect x="49" y="271" width="1" height="1"/><rect x="52" y="271" width="1" height="1" fill="#fff"/><rect x="53" y="272" width="2" height="1"/><rect x="54" y="271" width="1" height="1"/><rect x="62" y="271" width="1" height="1" fill="#fff"/><rect x="63" y="272" width="2" height="1"/><rect x="64" y="271" width="1" height="1"/><rect x="67" y="271" width="1" height="1" fill="#fff"/><rect x="68" y="272" width="2" height="1"/><rect x="69" y="271" width="1" height="1"/>
<rect x="36" y="269" width="1" height="5"/><rect x="56" y="269" width="1" height="5"/>
</g>
<path d="M16 12 L19.5 8 L23 12 Z" fill="#000" shape-rendering="auto"/>
<path d="M71 8 L78 8 L74.5 12 Z" fill="#000" shape-rendering="auto"/>
</svg>

<!-- red banner -->
<div class="a" style="left:16px;top:280px;width:664px;height:53px;background:#ff0000"></div>
<div class="t" style="left:19px;top:283px;color:#fff;font-weight:bold">Log [ Failure ]</div>
<div class="t" style="left:97px;top:283px;color:#fff">aufgerufen von 5. Baustein</div>
<div class="t" style="left:558px;top:283px;color:#fff;letter-spacing:-0.13px">Status: Nicht Bestanden</div>
<div class="t" style="left:18px;top:319px;color:#fff;letter-spacing:-0.18px">Fehlermeldung: Wert zu klein: 144</div>
<div class="t" style="left:662px;top:319px;color:#fff">0s</div>

<!-- bottom tabs -->
<div class="tab" style="left:19px;top:340px;width:211px;height:19px"></div>
<div class="tab" style="left:445px;top:340px;width:232px;height:19px"></div>
<div class="a" style="left:229px;top:337px;width:217px;height:22px;background:#ece9d8"></div>
<div class="a" style="left:231px;top:337px;width:213px;height:1px;background:#d89c3c"></div>
<div class="a" style="left:229px;top:338px;width:217px;height:2px;background:#ffc440"></div>
<div class="a" style="left:230px;top:337px;width:1px;height:1px;background:#f0c890"></div>
<div class="a" style="left:444px;top:337px;width:1px;height:1px;background:#f0c890"></div>
<div class="a" style="left:229px;top:340px;width:1px;height:19px;background:#7a7a70"></div>
<div class="a" style="left:445px;top:340px;width:1px;height:19px;background:#7a7a70"></div>
<div class="hl" style="left:16px;top:358px;width:214px;background:#7a7a70"></div>
<div class="hl" style="left:445px;top:358px;width:235px;background:#7a7a70"></div>
<div class="vl" style="left:16px;top:358px;height:127px;background:#7a7a70"></div>
<div class="vl" style="left:679px;top:358px;height:127px;background:#7a7a70"></div>
<div class="t" style="left:101px;top:343px">Quellcode</div>
<div class="t" style="left:314px;top:342px">Logdaten</div>
<div class="t" style="left:526px;top:343px">Ein/Ausgänge</div>


<!-- LOG TOOLBAR -->
<svg style="left:0;top:0" width="685" height="485">
<defs>
<linearGradient id="pm" x1="0" y1="0" x2="1" y2="1"><stop offset="0" stop-color="#fff"/><stop offset="1" stop-color="#c8ccd4"/></linearGradient>
<linearGradient id="ny" x1="0" y1="0" x2="1" y2="1"><stop offset="0" stop-color="#fff8b0"/><stop offset="1" stop-color="#f0d840"/></linearGradient>
</defs>
<g shape-rendering="crispEdges">
<rect x="23.5" y="370.5" width="12" height="12" fill="url(#pm)" stroke="#8a8a8a"/>
<rect x="24.5" y="371.5" width="10" height="10" fill="none" stroke="#fff"/>
<rect x="27" y="375" width="5" height="1" fill="#222"/><rect x="29" y="373" width="1" height="5" fill="#222"/>
<rect x="27" y="379" width="5" height="1" fill="#222"/>
<rect x="50.5" y="363.5" width="19" height="27" fill="none" stroke="#d4d0c0"/><rect x="74.5" y="363.5" width="19" height="27" fill="none" stroke="#d4d0c0"/><rect x="98.5" y="363.5" width="19" height="27" fill="none" stroke="#d4d0c0"/><rect x="122.5" y="363.5" width="19" height="27" fill="none" stroke="#d4d0c0"/><rect x="151.5" y="363.5" width="19" height="27" fill="none" stroke="#d4d0c0"/><rect x="175.5" y="363.5" width="19" height="27" fill="none" stroke="#d4d0c0"/><rect x="204.5" y="363.5" width="19" height="27" fill="none" stroke="#d4d0c0"/><rect x="233.5" y="363.5" width="18" height="27" fill="none" stroke="#d4d0c0"/><rect x="256.5" y="363.5" width="18" height="27" fill="none" stroke="#d4d0c0"/>
</g>
<svg x="54" y="372" width="12" height="12"><use href="#warn"/></svg>
<svg x="78" y="372" width="12" height="12"><use href="#warnd"/></svg>
<svg x="102" y="372" width="12" height="12"><use href="#warny"/></svg>
<g shape-rendering="crispEdges">
<rect x="125" y="371" width="14" height="14" fill="#d8ecfa"/>
<rect x="126" y="372" width="12" height="12" fill="#0a64ec"/>
<rect x="131" y="373" width="2" height="2" fill="#f0ffff"/>
<rect x="131" y="376" width="2" height="6" fill="#f0ffff"/>
<rect x="130" y="381" width="4" height="1" fill="#f0ffff"/>
</g>
<rect x="155.5" y="372.5" width="11" height="11" rx="2" fill="url(#ny)" stroke="#c08450"/>
<g fill="#6a5020" shape-rendering="crispEdges">
<rect x="157" y="375" width="8" height="1"/><rect x="157" y="377" width="4" height="1"/><rect x="162" y="377" width="2" height="1"/><rect x="157" y="379" width="2" height="1"/><rect x="160" y="379" width="5" height="1"/><rect x="157" y="381" width="3" height="1"/><rect x="161" y="381" width="3" height="1"/>
</g>
<g shape-rendering="crispEdges">
<rect x="179.5" y="372.5" width="11" height="11" fill="#40d0f0" stroke="#000"/>
<rect x="180" y="380" width="10" height="3" fill="#f0a020"/>
<rect x="184" y="374" width="3" height="7" fill="#2a9a98"/>
<rect x="183" y="376" width="5" height="3" fill="#2a9a98"/>
</g>
<path d="M208.5 372.5 H216.5 L220.5 376.5 V383.5 H208.5 Z" fill="url(#ny)" stroke="#c08450"/>
<g fill="#6a5020" shape-rendering="crispEdges">
<rect x="210" y="375" width="5" height="1"/><rect x="210" y="377" width="4" height="1"/><rect x="215" y="377" width="3" height="1"/><rect x="210" y="379" width="2" height="1"/><rect x="213" y="379" width="5" height="1"/><rect x="210" y="381" width="3" height="1"/><rect x="214" y="381" width="4" height="1"/>
</g>
<g shape-rendering="crispEdges">
<rect x="237" y="372" width="11" height="12" fill="#fff"/><rect x="237" y="372" width="1" height="1" fill="#000"/><rect x="238" y="372" width="1" height="1" fill="#000"/><rect x="239" y="372" width="1" height="1" fill="#000"/><rect x="240" y="372" width="1" height="1" fill="#000"/><rect x="241" y="372" width="1" height="1" fill="#000"/><rect x="242" y="372" width="1" height="1" fill="#000"/><rect x="243" y="372" width="1" height="1" fill="#000"/><rect x="244" y="372" width="1" height="1" fill="#000"/><rect x="245" y="372" width="1" height="1" fill="#000"/><rect x="246" y="372" width="1" height="1" fill="#000"/><rect x="247" y="372" width="1" height="1" fill="#000"/><rect x="237" y="373" width="1" height="1" fill="#000"/><rect x="247" y="373" width="1" height="1" fill="#000"/><rect x="237" y="374" width="1" height="1" fill="#000"/><rect x="243" y="374" width="1" height="1" fill="#000"/><rect x="244" y="374" width="1" height="1" fill="#000"/><rect x="247" y="374" width="1" height="1" fill="#000"/><rect x="237" y="375" width="1" height="1" fill="#000"/><rect x="240" y="375" width="1" height="1" fill="#000"/><rect x="242" y="375" width="1" height="1" fill="#000"/><rect x="243" y="375" width="1" height="1" fill="#000"/><rect x="244" y="375" width="1" height="1" fill="#000"/><rect x="245" y="375" width="1" height="1" fill="#000"/><rect x="247" y="375" width="1" height="1" fill="#000"/><rect x="237" y="376" width="1" height="1" fill="#000"/><rect x="243" y="376" width="1" height="1" fill="#000"/><rect x="244" y="376" width="1" height="1" fill="#000"/><rect x="247" y="376" width="1" height="1" fill="#000"/><rect x="237" y="377" width="1" height="1" fill="#000"/><rect x="239" y="377" width="1" height="1" fill="#000"/><rect x="246" y="377" width="1" height="1" fill="#000"/><rect x="247" y="377" width="1" height="1" fill="#000"/><rect x="237" y="378" width="1" height="1" fill="#000"/><rect x="241" y="378" width="1" height="1" fill="#000"/><rect x="243" y="378" width="1" height="1" fill="#000"/><rect x="244" y="378" width="1" height="1" fill="#000"/><rect x="245" y="378" width="1" height="1" fill="#000"/><rect x="247" y="378" width="1" height="1" fill="#000"/><rect x="237" y="379" width="1" height="1" fill="#000"/><rect x="243" y="379" width="1" height="1" fill="#000"/><rect x="244" y="379" width="1" height="1" fill="#000"/><rect x="245" y="379" width="1" height="1" fill="#000"/><rect x="247" y="379" width="1" height="1" fill="#000"/><rect x="237" y="380" width="1" height="1" fill="#000"/><rect x="239" y="380" width="1" height="1" fill="#000"/><rect x="242" y="380" width="1" height="1" fill="#000"/><rect x="243" y="380" width="1" height="1" fill="#000"/><rect x="244" y="380" width="1" height="1" fill="#000"/><rect x="245" y="380" width="1" height="1" fill="#000"/><rect x="247" y="380" width="1" height="1" fill="#000"/><rect x="237" y="381" width="1" height="1" fill="#000"/><rect x="242" y="381" width="1" height="1" fill="#000"/><rect x="243" y="381" width="1" height="1" fill="#000"/><rect x="244" y="381" width="1" height="1" fill="#000"/><rect x="245" y="381" width="1" height="1" fill="#000"/><rect x="247" y="381" width="1" height="1" fill="#000"/><rect x="237" y="382" width="1" height="1" fill="#000"/><rect x="241" y="382" width="1" height="1" fill="#000"/><rect x="242" y="382" width="1" height="1" fill="#000"/><rect x="243" y="382" width="1" height="1" fill="#000"/><rect x="244" y="382" width="1" height="1" fill="#000"/><rect x="245" y="382" width="1" height="1" fill="#000"/><rect x="247" y="382" width="1" height="1" fill="#000"/><rect x="237" y="383" width="1" height="1" fill="#000"/><rect x="238" y="383" width="1" height="1" fill="#000"/><rect x="239" y="383" width="1" height="1" fill="#000"/><rect x="240" y="383" width="1" height="1" fill="#000"/><rect x="241" y="383" width="1" height="1" fill="#000"/><rect x="242" y="383" width="1" height="1" fill="#000"/><rect x="243" y="383" width="1" height="1" fill="#000"/><rect x="244" y="383" width="1" height="1" fill="#000"/><rect x="245" y="383" width="1" height="1" fill="#000"/><rect x="246" y="383" width="1" height="1" fill="#000"/><rect x="247" y="383" width="1" height="1" fill="#000"/></g>
<circle cx="265.5" cy="378.5" r="5" fill="#fff" stroke="#000" stroke-width="1.1"/>
<path d="M265.5 375 V378.5 H268.5" fill="none" stroke="#000" stroke-width="1.1"/>
</svg>
<svg style="left:623px;top:370px" width="14" height="14"><use href="#chk"/></svg>
<div class="t" style="left:639px;top:371px;letter-spacing:-0.5px">Sublogs</div>
<!-- table -->
<div class="a" style="left:18px;top:393px;width:659px;height:68px;border-left:1px solid #8d8b80;border-top:1px solid #8d8b80;border-right:1px solid #000;border-bottom:1px solid #000"></div>
<div class="hl" style="left:19px;top:394px;width:657px;background:#f8f6ee"></div><div class="vl" style="left:19px;top:394px;height:20px;background:#f8f6ee"></div>
<div class="hl" style="left:19px;top:414px;width:657px;background:#000"></div>
<div class="hl" style="left:19px;top:437px;width:657px;background:#000"></div>
<div class="vl" style="left:240px;top:394px;height:66px;background:#000"></div>
<div class="vl" style="left:376px;top:394px;height:66px;background:#000"></div>
<div class="vl" style="left:576px;top:394px;height:66px;background:#000"></div>
<div class="t" style="left:124px;top:399px">Schritt</div>
<div class="t" style="left:246px;top:399px">Info</div>
<div class="t" style="left:381px;top:399px">Details</div>
<div class="t" style="left:617px;top:399px">Zeit</div>
<div class="t" style="left:44px;top:421px">Log [ Failure ]</div>
<div class="t" style="left:245px;top:421px">Startzeit</div>
<div class="t" style="left:381px;top:421px">Duration: 0s</div>
<div class="t" style="left:581px;top:421px">18:53:00.968</div>
<svg style="left:23px;top:443px" width="12" height="12"><use href="#warn"/></svg>
<div class="t" style="left:44px;top:444px">Log [ Failure ]</div>
<div class="t" style="left:245px;top:444px">Wert zu klein: 144</div>
<div class="t" style="left:581px;top:444px">18:53:00.968</div>

</body></html>
